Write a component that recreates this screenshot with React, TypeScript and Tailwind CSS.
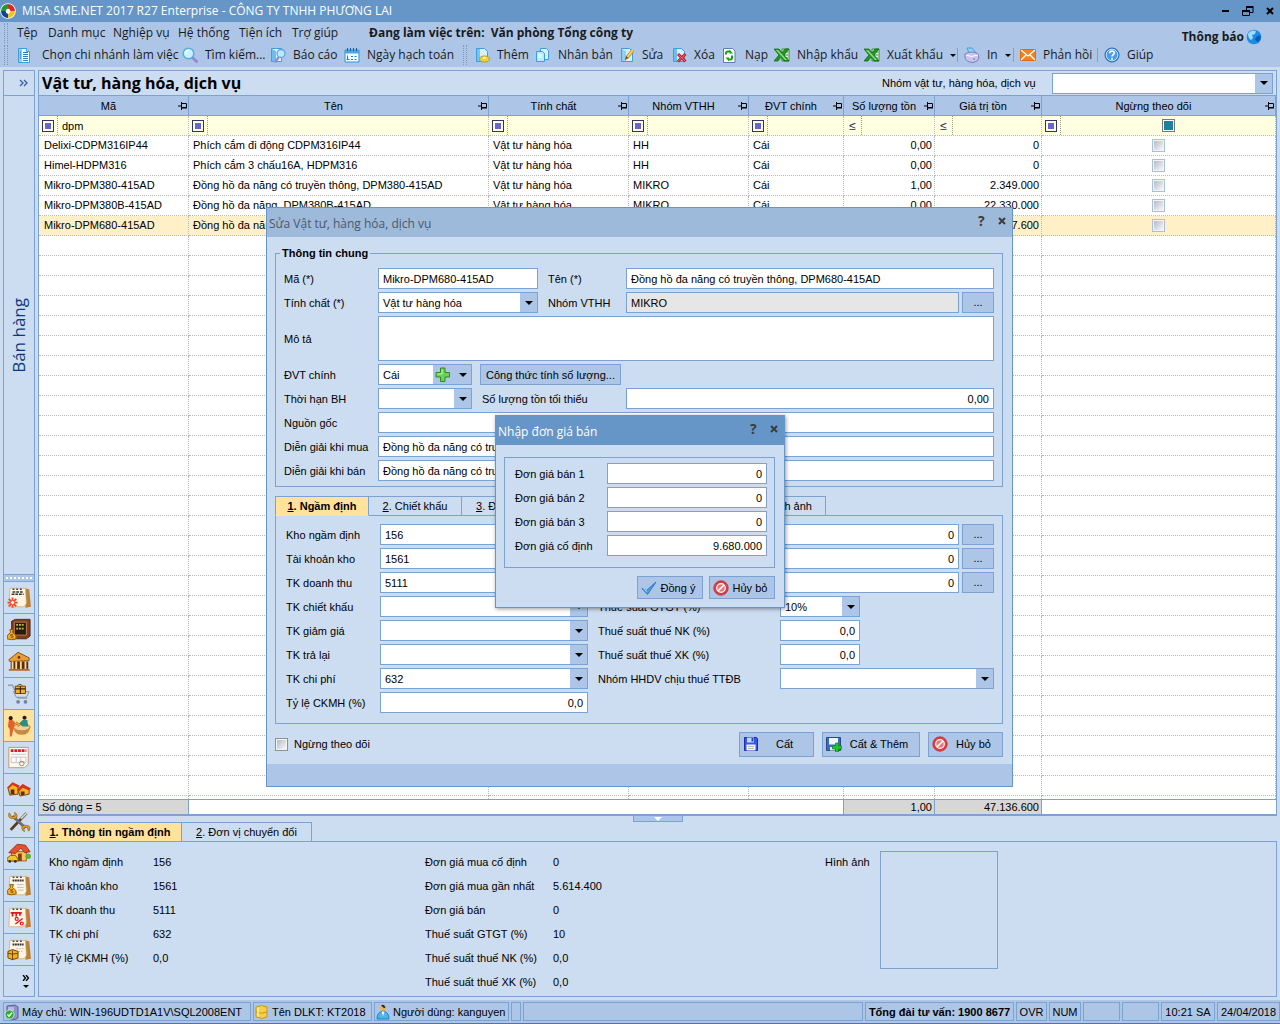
import React from 'react';

const UI_FONT = "font-['Open_Sans','Noto_Sans',sans-serif]";
const BODY_FONT = "font-['Liberation_Sans',Arial,sans-serif]";

/* ---------- toolbar icons ---------- */

const Icon: React.FC<{ children: React.ReactNode; size?: string; box?: string }> = ({
  children,
  size = 'size-4',
  box = '0 0 16 16',
}) => (
  <svg viewBox={box} className={`${size} shrink-0`} aria-hidden="true">
    {children}
  </svg>
);

const Sheet = () => (
  <path d="M2.5 1.5h8l3 3v10h-11z" fill="#d8f0fc" stroke="#3a9fe0" />
);

const BranchIcon = () => (
  <Icon>
    <path d="M3.5 1.500h8l3 3v11h-11z" fill="#f2fbff" stroke="#3a9fe0" />
    <path d="M4 2h3v13H4z" fill="#8fd0f5" />
    <path d="M5 5h1M5 7h1M5 9h1M5 11h1" stroke="#176fb5" />
    <path d="M8 5.500h5M8 7.500h5M8 9.500h5M8 11.500h5M8 13.500h5" stroke="#2b7ec2" />
    <path d="M11.500 1.500v3h3" fill="#bfe4fa" stroke="#3a9fe0" />
  </Icon>
);

const SearchIcon = () => (
  <Icon>
    <path d="M10 10l4.500 4.500" stroke="#9a86cf" strokeWidth="3" strokeLinecap="round" />
    <circle cx="6.500" cy="6.500" r="5.300" fill="#cdeefc" stroke="#4eaede" strokeWidth="1.400" />
    <path d="M3.600 6.500a3 3 0 0 1 3-3" stroke="#fff" strokeWidth="1.400" fill="none" />
  </Icon>
);

const ReportIcon = () => (
  <Icon>
    <path d="M1.500 1.500h10v13h-10z" fill="#e9f7ff" stroke="#3a9fe0" />
    <path d="M2 2l4 2v11l-4-1z" fill="#6fbdee" />
    <path d="M8.500 10.500l-3 4" stroke="#9a86cf" strokeWidth="2.400" strokeLinecap="round" />
    <circle cx="11" cy="6.500" r="4" fill="#bfe6fb" stroke="#5aa6d8" strokeWidth="1.300" />
  </Icon>
);

const CalendarIcon = () => (
  <Icon>
    <path d="M1 3h14v12H1z" fill="#f4fbff" stroke="#3590d6" />
    <path d="M1 3h14v3.500H1z" fill="#4aa5e6" />
    <path d="M3.500 1v3M6.500 1v3M9.500 1v3M12.500 1v3" stroke="#1f5d94" />
    <path d="M3.500 8.500v4M2.500 12.500h3M7 9.500h2M10.500 9.500h2M7 12.500h2M10.500 12.500h2" stroke="#2b7ec2" />
  </Icon>
);

const AddIcon = () => (
  <Icon>
    <Sheet />
    <path d="M3 2h3v12H3z" fill="#7cc4f0" />
    <ellipse cx="10.500" cy="12" rx="4.800" ry="3" fill="#e9d93c" stroke="#b79a18" />
    <ellipse cx="10.500" cy="11" rx="2.500" ry="1.600" fill="#fdf7a0" stroke="#c8ad2b" strokeWidth=".6" />
  </Icon>
);

const CopyIcon = () => (
  <Icon>
    <path d="M5.500 1.500h6l2 2v9h-8z" fill="#d8f0fc" stroke="#3a9fe0" />
    <path d="M1.500 4.500h6l2 2v8h-8z" fill="#c3e8fb" stroke="#3a9fe0" />
    <path d="M3 8h4M3 10h4" stroke="#fff" />
  </Icon>
);

const EditIcon = () => (
  <Icon>
    <Sheet />
    <path d="M3 2l4 2v10H3z" fill="#8fd0f5" />
    <path d="M14 3l-6 7.500" stroke="#c98a1d" strokeWidth="3.600" />
    <path d="M14 3l-6 7.500" stroke="#fbd45c" strokeWidth="2" />
    <path d="M7 9l2.500 2-3.500 2z" fill="#6b4a12" />
  </Icon>
);

const DeleteIcon = () => (
  <Icon>
    <Sheet />
    <path d="M3 2h3v12H3z" fill="#6fbdee" />
    <path d="M7 7l7.500 7.500M14.500 7L7 14.500" stroke="#c4202d" strokeWidth="3" />
    <path d="M7.500 7.500l6.500 6.500M14 7.500L7.500 14" stroke="#ee6b70" strokeWidth="1" />
  </Icon>
);

const ReloadIcon = () => (
  <Icon>
    <path d="M1.500 1.500h9l2.500 2.500v11.500H1.500z" fill="#fff" stroke="#5b7db8" />
    <path d="M4 7.500V6q0-1.500 2-1.500h2" stroke="#18a018" strokeWidth="2" fill="none" />
    <path d="M7.500 2.500l3.500 4H7.500z" fill="#18a018" />
    <path d="M10 8.500V11q0 1.500-2 1.500H6" stroke="#18a018" strokeWidth="2" fill="none" />
    <path d="M7 14.500l-3.500-4H7z" fill="#18a018" />
  </Icon>
);

const ExcelIcon = () => (
  <Icon>
    <path d="M8 2h7v12H8z" fill="#e7f5e4" stroke="#3c8e3a" />
    <path d="M10 5h4M10 8h4M10 11h4" stroke="#3c8e3a" />
    <path d="M0 2h5l3 4 3-4h4l-5 6 5 6h-5l-3-4-3 4H0l5-6z" fill="#1f9a22" stroke="#0d5f12" strokeWidth=".7" />
    <path d="M2 3h2l9 10h-2z" fill="#8fe07f" />
  </Icon>
);

const PrintIcon = () => (
  <Icon>
    <path d="M3 1h5l4 5H5z" fill="#8fd3fb" stroke="#4b9dd8" />
    <path d="M1 7q7-4 13 0l1 4q-1 4-6 4.500Q2 15 1 11z" fill="#c7c5ea" stroke="#7f7cbd" />
    <path d="M2 8q5 3 12 0" stroke="#fff" fill="none" />
    <circle cx="10" cy="12" r="1" fill="#8b88c8" />
  </Icon>
);

const MailIcon = () => (
  <Icon>
    <path d="M.5 2.500h15v11H.5z" fill="#f5821f" stroke="#e0690b" />
    <path d="M1 3l7 6 7-6M1 13l5-5M15 13l-5-5" stroke="#fff" strokeWidth="1.300" fill="none" />
  </Icon>
);

const HelpIcon = () => (
  <Icon>
    <circle cx="8" cy="8" r="7" fill="#4a9cec" stroke="#1d5fae" />
    <circle cx="8" cy="8" r="5.800" fill="none" stroke="#d7ecff" strokeWidth=".9" />
    <path d="M5.800 6.300q0-2.200 2.200-2.200t2.200 1.900q0 1.300-1.300 1.900-.9.500-.9 1.600" stroke="#fff" strokeWidth="1.600" fill="none" />
    <circle cx="8" cy="11.700" r="1" fill="#fff" />
  </Icon>
);

const GlobeIcon = () => (
  <Icon>
    <circle cx="8" cy="8" r="7.300" fill="#1b8be6" />
    <path d="M2 5q3-5 8-3l-1 3-3 1 1 3-2 2q-3-2-3-6z" fill="#9fdcff" />
    <path d="M10 8l4-2q2 4-2 7l-3-2z" fill="#0b5cb8" />
  </Icon>
);

const LogoIcon = () => (
  <Icon>
    <circle cx="8" cy="8" r="7.800" fill="#fff" />
    <path d="M8 1a7 7 0 0 0-7 7h5q0-2 2-2.500z" fill="#1c9a3f" />
    <path d="M8 1a7 7 0 0 1 7 7h-4.500Q10 6 8 5.500z" fill="#d92a1c" />
    <path d="M15 8a7 7 0 0 1-7 7v-4q2-.5 2.500-3z" fill="#f3c21b" />
    <path d="M8 15a7 7 0 0 1-7-7h4.500q.5 2.500 2.500 3z" fill="#123f9c" />
    <circle cx="8" cy="8" r="2" fill="#fff" />
  </Icon>
);

const CancelIcon = () => (
  <Icon>
    <circle cx="8" cy="8" r="7.200" fill="#e23b3f" stroke="#c22a30" strokeWidth=".8" />
    <circle cx="8" cy="8" r="4.300" fill="#e8777a" stroke="#fff" strokeWidth="1.200" />
    <path d="M5 11l6-6" stroke="#fff" strokeWidth="1.600" />
  </Icon>
);

const CheckIcon = () => (
  <Icon>
    <path d="M1 8.500l4.500 2L15 2 6.500 14.500z" fill="#4ba3ea" stroke="#1a66b8" strokeWidth=".8" />
    <path d="M2.500 9l3.500 2.500" stroke="#cfeaff" strokeWidth=".8" />
  </Icon>
);

const SaveIcon = () => (
  <Icon>
    <path d="M1.500 1.500h12l1 1v12h-13z" fill="#3558ea" stroke="#1b2fa8" />
    <path d="M4 1.500h7v5H4z" fill="#c9d6f5" />
    <path d="M8.500 2h2v3.500h-2z" fill="#2b43c8" />
    <path d="M3.500 8.500h9v6h-9z" fill="#f6f6f6" />
    <path d="M5 10.500h6M5 12.500h6" stroke="#b7b7b7" />
  </Icon>
);

const SaveAddIcon = () => (
  <Icon>
    <path d="M.5 1.500h14v13H.5z" fill="#3b6cc0" stroke="#274a8d" />
    <path d="M3 2h9v6.500H3z" fill="#f2f6fa" />
    <path d="M4 11h5v3.500H4z" fill="#dfe6ee" />
    <path d="M9.500 7h3v3H16v3h-3.500v3h-3v-3H6.500v-3h3z" fill="#22c528" stroke="#0f8a16" strokeWidth=".7" />
  </Icon>
);

const PlusIcon = () => (
  <Icon>
    <path d="M5.500 1h4.500v4.500h4.500V10H10v4.500H5.500V10H1V5.500h4.500z" fill="#6fd257" stroke="#2c8b22" />
    <path d="M7 2.500v4.500H2.500" stroke="#c3f2b2" fill="none" />
  </Icon>
);

const PinIcon = () => (
  <svg viewBox="0 0 10 8" className="h-2 w-2.5 shrink-0" aria-hidden="true">
    <path d="M0 4h3" stroke="#000" />
    <path d="M3.500 0v8" stroke="#000" />
    <path d="M3.500 1.500h5v4h-5" fill="none" stroke="#000" />
    <path d="M4 6h5" stroke="#000" />
  </svg>
);

const Arrow: React.FC<{ color?: string }> = ({ color = '#000' }) => (
  <svg viewBox="0 0 8 4" className="h-1 w-2 shrink-0" aria-hidden="true">
    <path d="M0 0h8L4 4z" fill={color} />
  </svg>
);

const CloseGlyph: React.FC<{ color?: string }> = ({ color = '#3c3c3c' }) => (
  <svg viewBox="0 0 8 8" className="size-2" aria-hidden="true">
    <path d="M1 1l6 6M7 1L1 7" stroke={color} strokeWidth="2" />
  </svg>
);

/* ---------- sidebar icons ---------- */

const Paper = () => (
  <>
    <path d="M19 2l5 1 2 19-6 1z" fill="#b98238" />
    <path d="M3 2h17l1 16q-1 4-4 4H2z" fill="#fdf6e6" stroke="#d3a868" strokeWidth=".8" />
    <path d="M6 3h2M10 3h2M14 3h2" stroke="#444" strokeWidth="1.500" />
  </>
);

const Bag: React.FC<{ x: number; y: number }> = ({ x, y }) => (
  <g transform={`translate(${x} ${y})`}>
    <path d="M3 0h4l-1 3q5 3 4 7-5 2-10 0-1-4 4-7z" fill="#f2b11b" stroke="#8a5200" />
    <path d="M6.500 5.500H4v1.500h2.500v1.500H4" stroke="#8a3a00" fill="none" strokeWidth=".8" />
  </g>
);

const navIcons: { name: string; art: React.ReactNode }[] = [
  {
    name: 'Kế hoạch',
    art: (
      <>
        <Paper />
        <path d="M6 6h12M5 8.500h13" stroke="#333" strokeDasharray="3 1" strokeWidth="1.500" />
        <path d="M6 12v11M.5 17.500h11M2 13.500l8 8M10 13.500l-8 8" stroke="#f04a28" strokeWidth="2" />
        <circle cx="6" cy="17.500" r="2.200" fill="#fff" stroke="#f04a28" />
      </>
    ),
  },
  {
    name: 'Quỹ',
    art: (
      <>
        <path d="M5 3l4-2h16v18l-4 3H5z" fill="#7d3f22" stroke="#4d210f" />
        <path d="M8 4h13v14H8z" fill="#2b1a12" stroke="#c08050" />
        <path d="M10 7h9M10 11h9" stroke="#b9c04a" strokeWidth="2" strokeDasharray="2 1" />
        <Bag x={0} y={12} />
      </>
    ),
  },
  {
    name: 'Ngân hàng',
    art: (
      <>
        <path d="M2 10L12 2l12 6v3L3 12z" fill="#e6a12e" stroke="#8a4b10" />
        <path d="M4 12h19v8H4z" fill="#5d2d10" />
        <path d="M6 12v8M10 12v8M15 12v8M20 12v8" stroke="#f6d99b" strokeWidth="2" />
        <path d="M2 20h22l1 2H2z" fill="#b56a26" />
        <circle cx="13" cy="7.500" r="1.500" fill="#7b2a08" />
      </>
    ),
  },
  {
    name: 'Mua hàng',
    art: (
      <>
        <path d="M1 3h5l6 14h10" stroke="#8aa0b8" strokeWidth="1.500" fill="none" />
        <path d="M7 10h17l-3 6H10z" fill="#d7e0ea" stroke="#7c8fa6" />
        <path d="M9 4h11v8H9z" fill="#f0b020" stroke="#6b3c00" />
        <path d="M14.500 4v8M9 7h11" stroke="#3c1d00" strokeWidth="1.200" />
        <path d="M11 4q3-4 6 0" stroke="#7b4b00" fill="none" />
        <circle cx="12" cy="21" r="2" fill="#70839a" />
        <circle cx="20" cy="21" r="2" fill="#70839a" />
      </>
    ),
  },
  {
    name: 'Bán hàng',
    art: (
      <>
        <ellipse cx="16" cy="14" rx="9" ry="4" fill="#f1cf94" stroke="#a86f2a" />
        <path d="M7 14q1 8 9 8t9-8q-9 7-18 0z" fill="#c78a45" />
        <circle cx="4" cy="4" r="2.200" fill="#2b1a12" />
        <path d="M2 6h4l4 4-2 1-1 5-2 8H3V16L1 13z" fill="#e2632a" />
        <circle cx="19" cy="3.500" r="2.200" fill="#2b1a12" />
        <path d="M17 6h5l1 7h-6l-4-3z" fill="#2c8c86" />
        <path d="M10 8l5 3-3 2z" fill="#f3c12d" stroke="#8a5200" strokeWidth=".5" />
      </>
    ),
  },
  {
    name: 'Hóa đơn',
    art: (
      <>
        <path d="M2 1h21v18l-4 4H2z" fill="#fffaf5" stroke="#c98e5d" />
        <path d="M4 4.500h17" stroke="#e3151c" strokeWidth="3" strokeDasharray="3 1" />
        <path d="M4.500 8.500h16M4.500 11.500h16v6h-16zM10 11.500v6M15 11.500v6" stroke="#c0c0c8" fill="none" />
        <circle cx="16" cy="18.500" r="2.500" fill="none" stroke="#e85b6b" />
      </>
    ),
  },
  {
    name: 'Kho',
    art: (
      <>
        <path d="M1 10l5-5 6 3v9l-9 1z" fill="#f2b52a" stroke="#7b3b00" />
        <path d="M0 10l6-6 8 4-2 2-6-3-4 4z" fill="#d8341c" />
        <path d="M12 12l5-5 7 4v6l-10 2z" fill="#f2b52a" stroke="#7b3b00" />
        <path d="M11 12l6-6 9 5-2 2-7-3-4 4z" fill="#d8341c" />
        <path d="M4 12h4v5H4zM15 14h4v4h-4z" fill="#5d2d10" />
      </>
    ),
  },
  {
    name: 'Công cụ dụng cụ',
    art: (
      <>
        <path d="M4 21L21 3" stroke="#5b3a1c" strokeWidth="3" />
        <path d="M15 9l6-6" stroke="#c9ced6" strokeWidth="2" />
        <path d="M6 6l14 13" stroke="#6a6f78" strokeWidth="3.200" />
        <path d="M3 3l2 4 4-1-1-4q3 1 3 4t-3 3-5-1-1-5z" fill="#e3a22b" stroke="#7b4b00" strokeWidth=".6" />
        <path d="M23 22l-1-4-4 1 1 4q-3-1-3-4t3-3 5 1 0 5z" fill="#e3a22b" stroke="#7b4b00" strokeWidth=".6" />
      </>
    ),
  },
  {
    name: 'Tài sản cố định',
    art: (
      <>
        <path d="M5 10h16v10H5z" fill="#f7c65a" stroke="#9a5a14" />
        <path d="M2 11l9-9 9 1 5 7-6 1-4-5-6 6z" fill="#e4512a" stroke="#a32a10" />
        <path d="M12 12h4v8h-4z" fill="#7d3f22" />
        <path d="M0 17l4-3h5l3 4v2H0z" fill="#f4c42a" stroke="#8a5200" />
        <circle cx="3" cy="20.500" r="1.500" fill="#333" />
        <circle cx="9" cy="20.500" r="1.500" fill="#333" />
        <circle cx="23" cy="15" r="3" fill="#63b33c" />
      </>
    ),
  },
  {
    name: 'Tiền lương',
    art: (
      <>
        <Paper />
        <path d="M6 6.500h12" stroke="#333" strokeWidth="2" strokeDasharray="2 .6" />
        <path d="M11 11h7M11 14h7M12 17h6" stroke="#b8b8b8" />
        <Bag x={0} y={11} />
      </>
    ),
  },
  {
    name: 'Thuế',
    art: (
      <>
        <Paper />
        <path d="M4 7h12M6 7v4M10 6v5M14 6v4" stroke="#e3151c" strokeWidth="1.800" />
        <path d="M9 19l8-6" stroke="#e3151c" strokeWidth="1.500" />
        <circle cx="10.500" cy="13.500" r="1.600" fill="none" stroke="#e3151c" strokeWidth="1.300" />
        <circle cx="16" cy="18.500" r="1.600" fill="none" stroke="#e3151c" strokeWidth="1.300" />
      </>
    ),
  },
  {
    name: 'Giá thành',
    art: (
      <>
        <Paper />
        <path d="M6 6.500h12" stroke="#333" strokeWidth="2" strokeDasharray="2 .6" />
        <path d="M10 11h8M12 14h6" stroke="#f0a890" strokeDasharray="2 1" />
        <path d="M1 14l5-2 6 2v7l-6 2-5-2z" fill="#f2b11b" stroke="#6b3c00" />
        <path d="M1 16l5 1 6-1M6 13v10" stroke="#6b3c00" fill="none" />
      </>
    ),
  },
];

/* ---------- form controls ---------- */

const BOX = 'h-[21px] min-w-0 border border-[#7ba2d3] bg-white px-1 text-[11px] text-black outline-none';

interface FieldProps {
  id: string;
  value?: string;
  className?: string;
}

const TextField: React.FC<FieldProps> = ({ id, value = '', className = '' }) => (
  <input id={id} type="text" defaultValue={value} className={`${BOX} ${className}`} />
);

const Combo: React.FC<FieldProps & { plus?: boolean }> = ({ id, value = '', className = '', plus }) => (
  <div className={`relative flex ${className}`}>
    <select id={id} defaultValue={value} className={`${BOX} w-full appearance-none`}>
      <option value={value}>{value}</option>
    </select>
    <span className="pointer-events-none absolute inset-y-px right-px flex items-center bg-[#adc6e7]">
      {plus && (
        <span className="pr-[3px] pl-0.5">
          <PlusIcon />
        </span>
      )}
      <span className="flex w-[17px] justify-center">
        <Arrow />
      </span>
    </span>
  </div>
);

const MoreButton: React.FC<{ label: string }> = ({ label }) => (
  <button
    type="button"
    aria-label={label}
    className="h-[21px] w-8 shrink-0 border border-[#7ba2d3] bg-[#adc6e7] text-[11px] leading-none"
  >
    ...
  </button>
);

const ActionButton: React.FC<{ icon: React.ReactNode; className: string; children: React.ReactNode }> = ({
  icon,
  className,
  children,
}) => (
  <button
    type="button"
    className={`flex items-center border border-[#7ba2d3] bg-[#adc6e7] px-[3px] text-[11px] whitespace-nowrap ${className}`}
  >
    {icon}
    <span className="flex-1 text-center">{children}</span>
  </button>
);

const CHECK =
  'size-[13px] shrink-0 appearance-none border bg-linear-to-br from-[#aeb4c0] to-white outline-1 -outline-offset-2 outline-[#f4f4f4]';

/* ---------- top bars ---------- */

const menus = [
  { text: 'Tệp', width: 'w-[31px]' },
  { text: 'Danh mục', width: 'w-[65px]' },
  { text: 'Nghiệp vụ', width: 'w-[65px]' },
  { text: 'Hệ thống', width: 'w-[61px]' },
  { text: 'Tiện ích', width: 'w-[53px]' },
  { text: 'Trợ giúp', width: 'w-[77px]' },
];

interface Tool {
  text: string;
  icon: React.ReactNode;
  width: string;
  gap?: string;
  drop?: boolean;
  grip?: boolean;
  sep?: boolean;
}

const tools: Tool[] = [
  { text: 'Chọn chi nhánh làm việc', icon: <BranchIcon />, width: 'w-[167px]', gap: 'gap-[11px]' },
  { text: 'Tìm kiếm...', icon: <SearchIcon />, width: 'w-[88px]' },
  { text: 'Báo cáo', icon: <ReportIcon />, width: 'w-[74px]' },
  { text: 'Ngày hạch toán', icon: <CalendarIcon />, width: 'w-[119px]' },
  { text: 'Thêm', icon: <AddIcon />, width: 'w-[61px]', grip: true },
  { text: 'Nhân bản', icon: <CopyIcon />, width: 'w-[84px]' },
  { text: 'Sửa', icon: <EditIcon />, width: 'w-[52px]' },
  { text: 'Xóa', icon: <DeleteIcon />, width: 'w-[51px]' },
  { text: 'Nạp', icon: <ReloadIcon />, width: 'w-[52px]' },
  { text: 'Nhập khẩu', icon: <ExcelIcon />, width: 'w-[90px]' },
  { text: 'Xuất khẩu', icon: <ExcelIcon />, width: 'w-[93px]', drop: true },
  { text: 'In', icon: <PrintIcon />, width: 'w-[49px]', drop: true, sep: true },
  { text: 'Phản hồi', icon: <MailIcon />, width: 'w-[77px]', sep: true },
  { text: 'Giúp', icon: <HelpIcon />, width: 'w-[60px]', sep: true },
];

const Grip = () => (
  <span className="h-5 w-1 shrink-0 border-x border-dotted border-[#8098b8]" />
);

const TopBars: React.FC = () => (
  <header className={UI_FONT}>
    <div className="flex h-[22px] items-center bg-[#6596c7] pr-1.5 text-white">
      <LogoIcon />
      <h1 className="flex-1 pl-1.5 text-xs">MISA SME.NET 2017 R27 Enterprise - CÔNG TY TNHH PHƯƠNG LAI</h1>
      <div className="flex items-center gap-3">
        <button type="button" aria-label="Thu nhỏ">
          <svg viewBox="0 0 8 10" className="h-2.5 w-2"><path d="M0 5h7" stroke="#000" strokeWidth="2" /></svg>
        </button>
        <button type="button" aria-label="Khôi phục">
          <svg viewBox="0 0 12 10" className="h-2.5 w-3">
            <path d="M4.500 4V1.500h6.500v5H8" fill="none" stroke="#000" />
            <path d="M4 1h7.500" stroke="#000" strokeWidth="2" />
            <path d="M.5 4.500h7v5h-7z" fill="none" stroke="#000" />
            <path d="M0 5h8" stroke="#000" strokeWidth="2" />
          </svg>
        </button>
        <button type="button" aria-label="Đóng">
          <CloseGlyph color="#000" />
        </button>
      </div>
    </div>

    <div className="flex h-[45px] items-start bg-[#adc6e7] pl-1 text-xs text-[#1a1a1a]">
      <div className="flex-1">
        <nav className="flex h-[22px] items-center whitespace-nowrap">
          <Grip />
          <span className="w-[9px]" />
          {menus.map((m) => (
            <button key={m.text} type="button" className={`text-left ${m.width}`}>
              {m.text}
            </button>
          ))}
          <strong className="mr-1.5">Đang làm việc trên:</strong>
          <strong>Văn phòng Tổng công ty</strong>
        </nav>
        <div className="flex h-[22px] items-center whitespace-nowrap">
          <Grip />
          <span className="w-[7px]" />
          {tools.map((t) => (
            <React.Fragment key={t.text}>
              {t.grip && (
                <span className="flex w-[11px]">
                  <Grip />
                </span>
              )}
              {t.sep && <span className="mr-[6px] h-3.5 w-px bg-[#7ba2d3]" />}
              <button type="button" className={`flex items-center text-left ${t.gap ?? 'gap-[7px]'} ${t.width}`}>
                {t.icon}
                {t.text}
                {t.drop && (
                  <svg viewBox="0 0 6 3" className="h-[3px] w-1.5"><path d="M0 0h6L3 3z" /></svg>
                )}
              </button>
            </React.Fragment>
          ))}
        </div>
      </div>
      <button type="button" className="mt-[7px] mr-[18px] flex items-center gap-0.5 font-bold">
        Thông báo
        <GlobeIcon />
      </button>
    </div>
  </header>
);

const Sidebar: React.FC = () => (
  <aside className="flex w-8 shrink-0 flex-col border border-[#7ba2d3]">
    <button type="button" aria-label="Mở rộng" className="flex h-[25px] items-center justify-center border-b border-[#7ba2d3] pl-2">
      <svg viewBox="0 0 9 8" className="h-2 w-[9px]">
        <path d="M1 1l3 3-3 3M5 1l3 3-3 3" fill="none" stroke="#35609c" strokeWidth="1.300" />
      </svg>
    </button>
    <div className="flex flex-1 items-center justify-center border-b border-[#7ba2d3]">
      <span className={`rotate-180 text-[17px] leading-5 text-[#0c3a7c] [writing-mode:vertical-rl] ${UI_FONT}`}>Bán hàng</span>
    </div>
    <div className="flex h-1.5 items-center bg-[#adc6e7] px-0.5">
      <span className="h-0.5 w-full border-t-2 border-dotted border-white" />
    </div>
    {navIcons.map((n) => (
      <button
        key={n.name}
        type="button"
        aria-label={n.name}
        className={`flex h-8 items-center justify-center border-t border-[#7ba2d3] ${
          n.name === 'Bán hàng' ? 'bg-[#ffe29b]' : ''
        }`}
      >
        <Icon size="size-6" box="0 0 26 25">
          {n.art}
        </Icon>
      </button>
    ))}
    <button type="button" aria-label="Thêm phân hệ" className="flex h-[31px] flex-col items-end justify-center gap-1 border-t border-[#7ba2d3] pr-1">
      <svg viewBox="0 0 8 6" className="h-1.5 w-2">
        <path d="M1 0l2.500 3L1 6M4 0l2.500 3L4 6" fill="none" stroke="#000" strokeWidth="1.300" />
      </svg>
      <svg viewBox="0 0 8 3" className="h-[3px] w-2"><path d="M1 0h6L4 3z" /></svg>
    </button>
  </aside>
);

/* ---------- item grid ---------- */

const columns = [
  { title: 'Mã', width: 'w-[150px]' },
  { title: 'Tên', width: 'w-[300px]' },
  { title: 'Tính chất', width: 'w-[140px]' },
  { title: 'Nhóm VTHH', width: 'w-[120px]' },
  { title: 'ĐVT chính', width: 'w-[95px]' },
  { title: 'Số lượng tồn', width: 'w-[91px]', numeric: true },
  { title: 'Giá trị tồn', width: 'w-[107px]', numeric: true },
  { title: 'Ngừng theo dõi', width: '' },
];

const items = [
  ['Delixi-CDPM316IP44', 'Phích cắm đi động CDPM316IP44', 'Vật tư hàng hóa', 'HH', 'Cái', '0,00', '0'],
  ['Himel-HDPM316', 'Phích cắm 3 chấu16A, HDPM316', 'Vật tư hàng hóa', 'HH', 'Cái', '0,00', '0'],
  ['Mikro-DPM380-415AD', 'Đồng hồ đa năng có truyền thông, DPM380-415AD', 'Vật tư hàng hóa', 'MIKRO', 'Cái', '1,00', '2.349.000'],
  ['Mikro-DPM380B-415AD', 'Đồng hồ đa năng, DPM380B-415AD', 'Vật tư hàng hóa', 'MIKRO', 'Cái', '0,00', '22.330.000'],
  ['Mikro-DPM680-415AD', 'Đồng hồ đa năng có truyền thông, DPM680-415AD', 'Vật tư hàng hóa', 'MIKRO', 'Cái', '0,00', '22.457.600'],
];

const EMPTY_ROWS = 28;
const CELL = 'border-r border-b border-dotted border-[#b9b9b9]';

const ItemGrid: React.FC = () => (
  <section className="border border-b-2 border-[#7ba2d3]">
    <div className="flex h-6 items-center">
      <h2 className={`flex-1 pl-[3px] text-base leading-6 font-bold ${UI_FONT}`}>Vật tư, hàng hóa, dịch vụ</h2>
      <label htmlFor="group-filter" className="w-[170px]">
        Nhóm vật tư, hàng hóa, dịch vụ
      </label>
      <Combo id="group-filter" className="mr-[3px] w-[221px]" />
    </div>

    <table className="w-full table-fixed border-separate border-spacing-0 bg-white">
      <colgroup>
        {columns.map((c) => (
          <col key={c.title} className={c.width} />
        ))}
      </colgroup>
      <thead>
        <tr className="h-[21px] bg-[#adc6e7]">
          {columns.map((c) => (
            <th key={c.title} className="border-y border-r border-[#7ba2d3] p-0 font-normal">
              <div className="flex items-center">
                <span className="flex-1 text-center whitespace-nowrap">{c.title}</span>
                <PinIcon />
              </div>
            </th>
          ))}
        </tr>
        <tr className="h-5 bg-[#ffffe1]">
          {columns.map((c, i) => (
            <td key={c.title} className={`p-0 ${CELL}`}>
              <div className="flex h-[19px] items-center">
                <button
                  type="button"
                  aria-label={`Điều kiện lọc ${c.title}`}
                  className={`flex h-full shrink-0 items-center justify-center border-r border-dotted border-[#999] ${c.numeric ? 'w-[18px]' : 'w-[19px]'}`}
                >
                  {c.numeric ? (
                    <span className="text-xs leading-none text-[#222255]">≤</span>
                  ) : (
                    <span className="flex size-3 items-center justify-center border border-[#333366]">
                      <span className="size-1.5 bg-[#6666cc]" />
                    </span>
                  )}
                </button>
                {i === 7 ? (
                  <span className="flex flex-1 justify-center">
                    <input
                      type="checkbox"
                      aria-label="Lọc Ngừng theo dõi"
                      className="size-[13px] appearance-none border border-[#777] bg-[#1f7f9f] outline-1 -outline-offset-2 outline-white"
                    />
                  </span>
                ) : (
                  <input
                    type="text"
                    aria-label={`Lọc ${c.title}`}
                    defaultValue={i === 0 ? 'dpm' : ''}
                    className="h-4 w-0 flex-1 pl-1 outline-none"
                  />
                )}
              </div>
            </td>
          ))}
        </tr>
      </thead>
      <tbody>
        {items.map((row, r) => (
          <tr key={row[0]} className={`h-5 ${r === 4 ? 'bg-[#fff0c8]' : ''}`}>
            {row.map((cell, i) => (
              <td
                key={columns[i].title}
                className={`overflow-hidden p-0 leading-[19px] whitespace-nowrap ${CELL} ${
                  i > 4 ? 'pr-0.5 text-right' : i === 0 ? 'pl-[5px]' : 'pl-1'
                }`}
              >
                {cell}
              </td>
            ))}
            <td className={`p-0 ${CELL}`}>
              <div className="flex justify-center">
                <input type="checkbox" aria-label={`Ngừng theo dõi ${row[0]}`} className={`border-[#a9bfdd] ${CHECK}`} />
              </div>
            </td>
          </tr>
        ))}
        {Array.from({ length: EMPTY_ROWS }, (_, r) => (
          <tr key={r} className="h-5">
            {columns.map((c) => (
              <td key={c.title} className={`p-0 ${CELL}`} />
            ))}
          </tr>
        ))}
      </tbody>
      <tfoot>
        <tr className="h-[3px]">
          {columns.map((c) => (
            <td key={c.title} className="border-r border-dotted border-[#b9b9b9] p-0" />
          ))}
        </tr>
        <tr className="h-[15px] leading-[14px]">
          <td className="border-t border-r border-[#7ba2d3] bg-[#d7d7d7] p-0 pl-[3px]">Số dòng = 5</td>
          <td colSpan={4} className="border-t border-r border-[#7ba2d3] p-0" />
          <td className="border-t border-r border-[#7ba2d3] bg-[#d7d7d7] p-0 pr-0.5 text-right">1,00</td>
          <td className="border-t border-r border-[#7ba2d3] bg-[#d7d7d7] p-0 pr-0.5 text-right">47.136.600</td>
          <td className="border-t border-[#7ba2d3] p-0" />
        </tr>
      </tfoot>
    </table>
  </section>
);

/* ---------- detail panel ---------- */

const TabButton: React.FC<{ n: number; text: string; active?: boolean; className: string }> = ({
  n,
  text,
  active,
  className,
}) => (
  <button
    type="button"
    role="tab"
    aria-selected={!!active}
    className={`h-5 border border-[#7ba2d3] text-[11px] whitespace-nowrap ${
      active ? 'border-b-[#ffe29b] bg-[#ffe29b] font-bold' : 'border-l-0'
    } ${className}`}
  >
    <span className="underline">{n}</span>. {text}
  </button>
);

const summaryLeft = [
  ['Kho ngầm định', '156'],
  ['Tài khoản kho', '1561'],
  ['TK doanh thu', '5111'],
  ['TK chi phí', '632'],
  ['Tỷ lệ CKMH (%)', '0,0'],
];

const summaryRight = [
  ['Đơn giá mua cố định', '0'],
  ['Đơn giá mua gần nhất', '5.614.400'],
  ['Đơn giá bán', '0'],
  ['Thuế suất GTGT (%)', '10'],
  ['Thuế suất thuế NK (%)', '0,0'],
  ['Thuế suất thuế XK (%)', '0,0'],
];

const Summary: React.FC<{ rows: string[][]; label: string; className: string }> = ({ rows, label, className }) => (
  <dl className={className}>
    {rows.map(([k, v]) => (
      <div key={k} className="flex h-6 items-center">
        <dt className={label}>{k}</dt>
        <dd>{v}</dd>
      </div>
    ))}
  </dl>
);

const DetailPanel: React.FC = () => (
  <section className="flex flex-1 flex-col">
    <div className="flex h-1.5 justify-center">
      <button type="button" aria-label="Ẩn chi tiết" className="flex w-[50px] items-center justify-center border border-t-0 border-[#7ba2d3] bg-[#adc6e7]">
        <Arrow color="#fff" />
      </button>
    </div>
    <div role="tablist" className="-mb-px flex">
      <TabButton n={1} text="Thông tin ngầm định" active className="w-[144px]" />
      <TabButton n={2} text="Đơn vị chuyển đổi" className="w-[130px]" />
    </div>
    <div className="flex flex-1 border border-[#7ba2d3] pt-2 pl-2.5">
      <Summary rows={summaryLeft} label="w-[104px]" className="w-[376px]" />
      <Summary rows={summaryRight} label="w-[128px]" className="w-[400px]" />
      <span className="w-[55px] pt-1">Hình ảnh</span>
      <div className="mt-px size-[118px] border border-[#7ba2d3]" />
    </div>
  </section>
);

/* ---------- status bar ---------- */

const CELL_STATUS = 'flex h-[19px] items-center border border-[#7ba2d3] whitespace-nowrap';

const StatusBar: React.FC = () => (
  <footer className="flex h-6 items-center gap-0.5 border-b border-[#1889d8] bg-[#adc6e7] pl-[3px] text-[11px]">
    <div className={`w-[248px] gap-0.5 ${CELL_STATUS}`}>
      <Icon>
        <path d="M3 2l8-1 3 2v11l-3 1.500-8-1z" fill="#8e93c8" stroke="#5a5f9a" />
        <path d="M4 4h6M4 6h6" stroke="#dfe2f7" />
        <circle cx="5.500" cy="10.500" r="4.500" fill="#2fae3a" stroke="#fff" strokeWidth=".6" />
        <path d="M3.500 10.500l1.500 1.700 3-3.500" stroke="#fff" strokeWidth="1.400" fill="none" />
      </Icon>
      Máy chủ: WIN-196UDTD1A1V\SQL2008ENT
    </div>
    <div className={`w-[119px] gap-0.5 ${CELL_STATUS}`}>
      <Icon>
        <path d="M2 3q5-3 11 0v10q-5 3-11 0z" fill="#f7cf45" stroke="#c8941a" />
        <path d="M2 8q5 2.500 11 0" stroke="#c8941a" fill="none" />
        <path d="M4 3.500v9" stroke="#fff2a8" strokeWidth="1.500" />
      </Icon>
      Tên DLKT: KT2018
    </div>
    <div className={`w-[135px] gap-0.5 ${CELL_STATUS}`}>
      <Icon>
        <circle cx="8" cy="4" r="2.800" fill="#f2b13a" />
        <path d="M6 1.500q3-2 4.500 2L9 4z" fill="#222" />
        <path d="M2 15q0-7 6-8 6 1 6 8z" fill="#4fb3ee" stroke="#1f7fc2" />
        <path d="M6.500 7.500L8 12l1.500-4.500z" fill="#fff" />
      </Icon>
      Người dùng: kanguyen
    </div>
    <div className={`w-2.5 ${CELL_STATUS}`} />
    <div className={`flex-1 ${CELL_STATUS}`} />
    <div className={`w-[149px] justify-center font-bold ${CELL_STATUS}`}>Tổng đài tư vấn: 1900 8677</div>
    <div className={`w-[31px] justify-center ${CELL_STATUS}`}>OVR</div>
    <div className={`w-8 justify-center ${CELL_STATUS}`}>NUM</div>
    <div className={`w-[37px] ${CELL_STATUS}`} />
    <div className={`w-[37px] ${CELL_STATUS}`} />
    <div className={`w-[54px] justify-center ${CELL_STATUS}`}>10:21 SA</div>
    <div className={`w-[63px] justify-center ${CELL_STATUS}`}>24/04/2018</div>
  </footer>
);

/* ---------- dialogs ---------- */

const DialogTitle: React.FC<{ className: string; children: React.ReactNode }> = ({ className, children }) => (
  <div className={`flex h-[29px] items-center pr-1.5 pl-0.5 text-xs ${UI_FONT} ${className}`}>
    <h2 className="flex-1 pt-0.5">{children}</h2>
    <div className="flex items-center pb-1">
      <button type="button" aria-label="Trợ giúp" className="w-5 text-left text-sm leading-none font-bold text-[#3c3c3c]">
        ?
      </button>
      <button type="button" aria-label="Đóng">
        <CloseGlyph />
      </button>
    </div>
  </div>
);

const GeneralInfo: React.FC = () => (
  <fieldset className="min-w-0 border border-[#7ba2d3] pt-[7px] pr-2 pb-[5px] pl-2">
    <legend className="-ml-1 h-4 px-0.5 text-[11px] leading-4 font-bold">Thông tin chung</legend>
    <div className="flex flex-col gap-[3px]">
      <div className="flex items-center">
        <label htmlFor="code" className="w-[94px]">Mã (*)</label>
        <TextField id="code" value="Mikro-DPM680-415AD" className="w-[160px]" />
        <label htmlFor="name" className="w-[88px] pl-2.5">Tên (*)</label>
        <TextField id="name" value="Đồng hồ đa năng có truyền thông, DPM680-415AD" className="flex-1" />
      </div>
      <div className="flex items-center">
        <label htmlFor="kind" className="w-[94px]">Tính chất (*)</label>
        <Combo id="kind" value="Vật tư hàng hóa" className="w-[160px]" />
        <label htmlFor="group" className="w-[88px] pl-2.5">Nhóm VTHH</label>
        <input id="group" readOnly value="MIKRO" className="mr-[3px] h-[21px] min-w-0 flex-1 border border-[#7ba2d3] bg-[#e6e6e6] px-1 outline-none" />
        <MoreButton label="Chọn nhóm VTHH" />
      </div>
      <div className="flex items-center">
        <label htmlFor="desc" className="w-[94px]">Mô tả</label>
        <textarea id="desc" className="h-[45px] flex-1 resize-none border border-[#7ba2d3] bg-white outline-none" />
      </div>
      <div className="flex items-center">
        <label htmlFor="unit" className="w-[94px]">ĐVT chính</label>
        <Combo id="unit" value="Cái" plus className="mr-2 w-[94px]" />
        <button type="button" className="h-[21px] border border-[#7ba2d3] bg-[#adc6e7] px-[5px] whitespace-nowrap">
          Công thức tính số lượng...
        </button>
      </div>
      <div className="flex items-center">
        <label htmlFor="warranty" className="w-[94px]">Thời hạn BH</label>
        <Combo id="warranty" className="w-[94px]" />
        <label htmlFor="min-stock" className="w-[154px] pl-2.5">Số lượng tồn tối thiểu</label>
        <TextField id="min-stock" value="0,00" className="flex-1 text-right" />
      </div>
      <div className="flex items-center">
        <label htmlFor="origin" className="w-[94px]">Nguồn gốc</label>
        <TextField id="origin" className="flex-1" />
      </div>
      <div className="flex items-center">
        <label htmlFor="buy-note" className="w-[94px]">Diễn giải khi mua</label>
        <TextField id="buy-note" value="Đồng hồ đa năng có truyền thông, DPM680-415AD" className="flex-1" />
      </div>
      <div className="flex items-center">
        <label htmlFor="sell-note" className="w-[94px]">Diễn giải khi bán</label>
        <TextField id="sell-note" value="Đồng hồ đa năng có truyền thông, DPM680-415AD" className="flex-1" />
      </div>
    </div>
  </fieldset>
);

const accounts = [
  { id: 'acc-store', label: 'Kho ngầm định', value: '156' },
  { id: 'acc-stock', label: 'Tài khoản kho', value: '1561' },
  { id: 'acc-sales', label: 'TK doanh thu', value: '5111' },
  { id: 'acc-discount', label: 'TK chiết khấu', value: '' },
  { id: 'acc-reduce', label: 'TK giảm giá', value: '' },
  { id: 'acc-return', label: 'TK trả lại', value: '' },
  { id: 'acc-cost', label: 'TK chi phí', value: '632' },
];

const prices = [
  { id: 'price-fixed', label: 'Đơn giá mua cố định' },
  { id: 'price-last', label: 'Đơn giá mua gần nhất' },
  { id: 'price-sell', label: 'Đơn giá bán' },
];

const Defaults: React.FC = () => (
  <div className="mt-[9px]">
    <div role="tablist" className="-mb-px flex">
      <TabButton n={1} text="Ngầm định" active className="w-[94px]" />
      <TabButton n={2} text="Chiết khấu" className="w-[93px]" />
      <TabButton n={3} text="Đơn vị chuyển đổi" className="w-[130px]" />
      <TabButton n={4} text="Mã quy cách" className="w-[150px]" />
      <TabButton n={5} text="Hình ảnh" className="w-[84px]" />
    </div>
    <div className="flex border border-[#7ba2d3] pt-2 pr-2 pb-2.5 pl-2.5">
      <div className="flex w-[302px] flex-col gap-[3px]">
        {accounts.map((a) => (
          <div key={a.id} className="flex items-center">
            <label htmlFor={a.id} className="w-[94px]">{a.label}</label>
            <Combo id={a.id} value={a.value} className="w-[208px]" />
          </div>
        ))}
        <div className="flex items-center">
          <label htmlFor="ckmh" className="w-[94px]">Tỷ lệ CKMH (%)</label>
          <TextField id="ckmh" value="0,0" className="w-[208px] text-right" />
        </div>
      </div>
      <div className="flex min-w-0 flex-1 flex-col gap-[3px] pl-2.5">
        {prices.map((p) => (
          <div key={p.id} className="flex items-center">
            <label htmlFor={p.id} className="w-[182px]">{p.label}</label>
            <TextField id={p.id} value="0" className="mr-[3px] flex-1 text-right" />
            <MoreButton label={`Nhập ${p.label}`} />
          </div>
        ))}
        <div className="flex items-center">
          <label htmlFor="vat" className="w-[182px]">Thuế suất GTGT (%)</label>
          <Combo id="vat" value="10%" className="w-20" />
        </div>
        <div className="flex items-center">
          <label htmlFor="import-tax" className="w-[182px]">Thuế suất thuế NK (%)</label>
          <TextField id="import-tax" value="0,0" className="w-20 text-right" />
        </div>
        <div className="flex items-center">
          <label htmlFor="export-tax" className="w-[182px]">Thuế suất thuế XK (%)</label>
          <TextField id="export-tax" value="0,0" className="w-20 text-right" />
        </div>
        <div className="flex items-center">
          <label htmlFor="excise" className="w-[182px]">Nhóm HHDV chịu thuế TTĐB</label>
          <Combo id="excise" className="flex-1" />
        </div>
      </div>
    </div>
  </div>
);

const EditDialog: React.FC = () => (
  <div role="dialog" aria-label="Sửa Vật tư, hàng hóa, dịch vụ" className="absolute top-[207px] left-[266px] w-[747px] border border-[#6596c7] bg-[#ccdcf1]">
    <DialogTitle className="bg-[#9dbada] text-[#4c586c]">Sửa Vật tư, hàng hóa, dịch vụ</DialogTitle>
    <div className="pt-2 pr-[9px] pl-2">
      <GeneralInfo />
      <Defaults />
      <div className="flex h-10 items-center gap-2">
        <label className="flex flex-1 items-center gap-1.5">
          <input type="checkbox" className={`border-[#8e8f8f] ${CHECK}`} />
          Ngừng theo dõi
        </label>
        <ActionButton icon={<SaveIcon />} className="h-[25px] w-[75px]">Cất</ActionButton>
        <ActionButton icon={<SaveAddIcon />} className="h-[25px] w-[98px]">Cất &amp; Thêm</ActionButton>
        <ActionButton icon={<CancelIcon />} className="h-[25px] w-[75px]">Hủy bỏ</ActionButton>
      </div>
    </div>
    <div className="h-[22px] bg-[#adc6e7]" />
  </div>
);

const salePrices = [
  { id: 'sale-1', label: 'Đơn giá bán 1', value: '0' },
  { id: 'sale-2', label: 'Đơn giá bán 2', value: '0' },
  { id: 'sale-3', label: 'Đơn giá bán 3', value: '0' },
  { id: 'sale-fixed', label: 'Đơn giá cố định', value: '9.680.000' },
];

const PriceDialog: React.FC = () => (
  <div role="dialog" aria-label="Nhập đơn giá bán" className="absolute top-[415px] left-[495px] w-[290px] border border-[#6596c7] bg-[#ccdcf1] shadow-[1px_1px_4px_rgba(0,0,0,0.4)]">
    <DialogTitle className="bg-[#6596c7] text-white">Nhập đơn giá bán</DialogTitle>
    <div className="pt-3 pr-[9px] pb-2 pl-2">
      <div className="flex flex-col gap-[3px] border border-[#7ba2d3] pt-[5px] pr-[7px] pb-[11px] pl-2.5">
        {salePrices.map((p) => (
          <div key={p.id} className="flex items-center">
            <label htmlFor={p.id} className="w-[92px]">{p.label}</label>
            <TextField id={p.id} value={p.value} className="flex-1 text-right" />
          </div>
        ))}
      </div>
      <div className="mt-2 flex justify-end gap-1.5">
        <ActionButton icon={<CheckIcon />} className="h-[23px] w-[66px]">Đồng ý</ActionButton>
        <ActionButton icon={<CancelIcon />} className="h-[23px] w-[66px]">Hủy bỏ</ActionButton>
      </div>
    </div>
  </div>
);

export default function App() {
  return (
    <div className={`relative flex min-h-screen flex-col bg-[#ccdcf1] text-[11px] leading-4 text-black ${BODY_FONT}`}>
      <TopBars />
      <main className="flex flex-1 gap-[3px] p-[3px]">
        <Sidebar />
        <div className="flex min-w-0 flex-1 flex-col">
          <ItemGrid />
          <DetailPanel />
        </div>
      </main>
      <StatusBar />
      <EditDialog />
      <PriceDialog />
    </div>
  );
}
